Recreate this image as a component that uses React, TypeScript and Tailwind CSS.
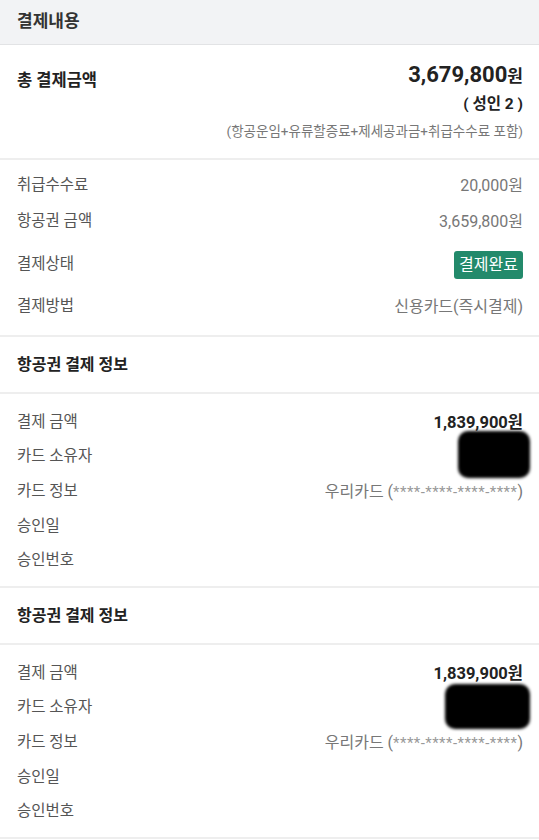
import React from 'react';

const font = "font-['Roboto','Noto_Sans_CJK_KR',sans-serif]";

const InfoRow: React.FC<{ label: string; h: string; children?: React.ReactNode }> = ({ label, h, children }) => (
  <div className={`flex items-center justify-between ${h}`}>
    <span className="text-[15.5px] text-[#555]">{label}</span>
    {children}
  </div>
);

const CardSection: React.FC<{ mask: string }> = ({ mask }) => (
  <div>
    <div className="flex h-[57px] items-center border-t-2 border-[#eeeeee] px-[16px] pl-[17px]">
      <h3 className="text-[16px] font-bold text-[#222]">항공권 결제 정보</h3>
    </div>
    <div className="border-t-2 border-[#eeeeee] pt-[12px] pr-[16px] pb-[8px] pl-[17px]">
      <InfoRow label="결제 금액" h="h-[34px]">
        <span className="text-[16.5px] font-bold text-[#222]">1,839,900원</span>
      </InfoRow>
      <div className="relative">
        <InfoRow label="카드 소유자" h="h-[34px]" />
        {/* masked owner name */}
        <div className={`absolute right-[-7px] rounded-[10px] bg-black blur-[1.5px] ${mask}`} />
      </div>
      <InfoRow label="카드 정보" h="h-[36px]">
        <span className="text-[16px] text-[#777]">
          우리카드 (<span className="text-[15px] tracking-[0.45px] text-[#999]">****-****-****-****</span>)
        </span>
      </InfoRow>
      <InfoRow label="승인일" h="h-[34px]" />
      <InfoRow label="승인번호" h="h-[34px]" />
    </div>
  </div>
);

export default function App() {
  return (
    <div className={`min-h-[840px] w-full bg-white ${font}`}>
      {/* Header */}
      <div className="flex h-[45px] items-center border-b border-[#e2e3e5] bg-[#f2f3f5] px-[17px]">
        <h2 className="text-[17px] font-bold text-[#333]">결제내용</h2>
      </div>

      {/* Total */}
      <div className="flex justify-between pt-[15px] pr-[16px] pb-[15px] pl-[17px]">
        <span className="pt-[9px] text-[16.5px] font-bold text-[#222]">총 결제금액</span>
        <div className="flex flex-col items-end">
          <span className="text-[22px] leading-[30px] font-bold text-[#222]">
            3,679,800<span className="text-[17px]">원</span>
          </span>
          <span className="text-[15.5px] leading-[26px] font-bold text-[#222]">( 성인 2 )</span>
          <span className="mt-[2px] text-[13.5px] leading-[24px] text-[#777]">
            (항공운임+유류할증료+제세공과금+취급수수료 포함)
          </span>
        </div>
      </div>

      {/* Fees */}
      <div className="border-t-2 border-[#eeeeee] pt-[8px] pr-[16px] pb-[11px] pl-[17px]">
        <InfoRow label="취급수수료" h="h-[36px]">
          <span className="text-[16px] text-[#777]">20,000원</span>
        </InfoRow>
        <InfoRow label="항공권 금액" h="h-[36px]">
          <span className="text-[16px] text-[#777]">3,659,800원</span>
        </InfoRow>
        <InfoRow label="결제상태" h="h-[50px]">
          <span className="flex h-[28px] items-center rounded-[3px] bg-[#238a6b] px-[5px] text-[16px] text-white">
            결제완료
          </span>
        </InfoRow>
        <InfoRow label="결제방법" h="h-[34px]">
          <span className="text-[16px] text-[#777]">신용카드(즉시결제)</span>
        </InfoRow>
      </div>

      <CardSection mask="top-[-9px] h-[47px] w-[72px]" />
      <CardSection mask="top-[-7px] h-[45px] w-[85px]" />
      <div className="border-t-2 border-[#eeeeee]" />
    </div>
  );
}
